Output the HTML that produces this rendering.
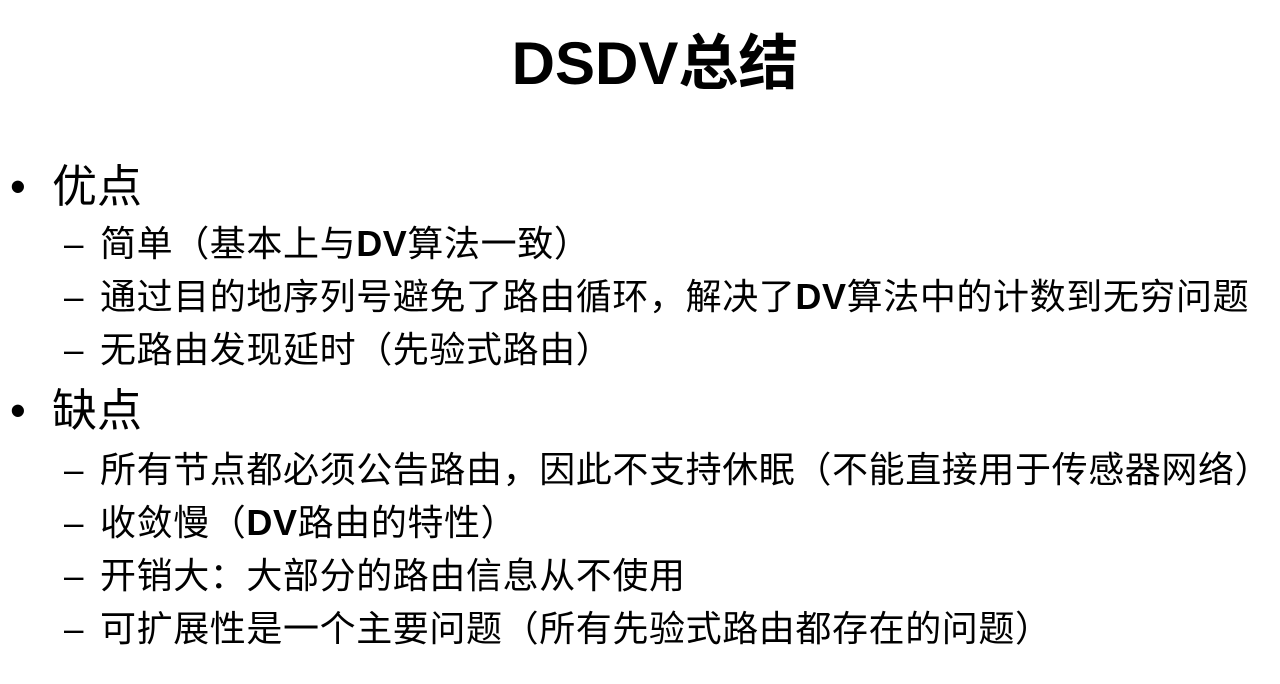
<!DOCTYPE html>
<html><head><meta charset="utf-8"><style>
body{margin:0;width:1280px;height:684px;background:#fff;position:relative;overflow:hidden;font-family:"Liberation Sans","Noto Sans CJK SC",sans-serif;color:#000}
.t{position:absolute;white-space:nowrap;line-height:1}
.title{left:0;width:1310px;text-align:center;top:34px;font-size:60px;font-weight:bold}
.b{left:52px;font-size:45px}
.bd{left:10px;font-size:45px}
.s{left:100px;font-size:36px;letter-spacing:0.6px}
.d{left:64px;font-size:35px}
b{font-weight:bold}
</style></head><body>
<div class="t title">DSDV总结</div>
<div class="t bd" style="top:164px">•</div><div class="t b" style="top:164px">优点</div>
<div class="t d" style="top:227px">–</div><div class="t s" style="top:226px">简单（基本上与<b>DV</b>算法一致）</div>
<div class="t d" style="top:280px">–</div><div class="t s" style="top:279px">通过目的地序列号避免了路由循环，解决了<b>DV</b>算法中的计数到无穷问题</div>
<div class="t d" style="top:333px">–</div><div class="t s" style="top:332px">无路由发现延时（先验式路由）</div>
<div class="t bd" style="top:388px">•</div><div class="t b" style="top:388px">缺点</div>
<div class="t d" style="top:453px">–</div><div class="t s" style="top:452px">所有节点都必须公告路由，因此不支持休眠（不能直接用于传感器网络）</div>
<div class="t d" style="top:506px">–</div><div class="t s" style="top:505px">收敛慢（<b>DV</b>路由的特性）</div>
<div class="t d" style="top:559px">–</div><div class="t s" style="top:558px">开销大：大部分的路由信息从不使用</div>
<div class="t d" style="top:612px">–</div><div class="t s" style="top:611px">可扩展性是一个主要问题（所有先验式路由都存在的问题）</div>
</body></html>
